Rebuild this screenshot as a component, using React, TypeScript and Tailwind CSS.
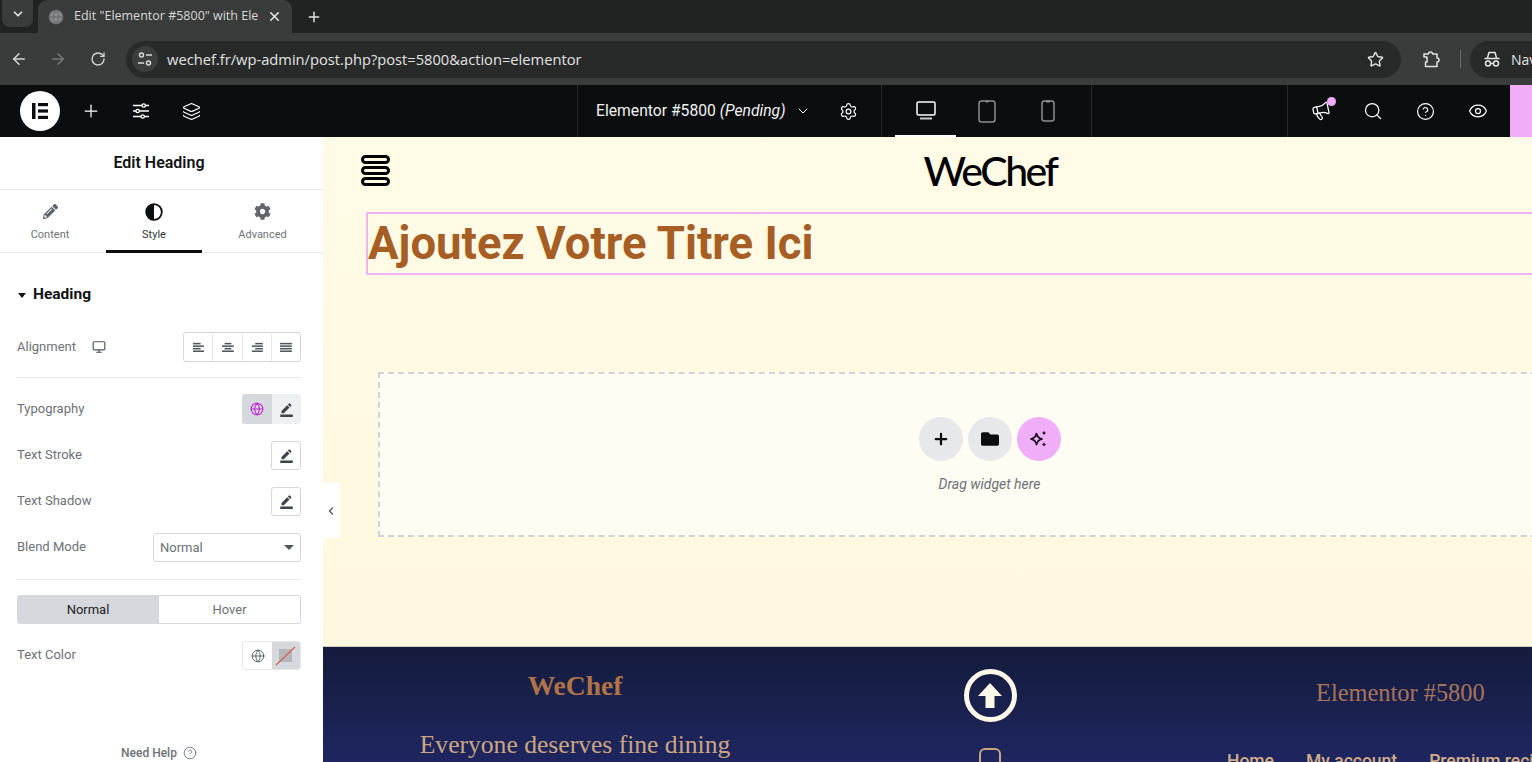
import { ArrowLeft, ArrowRight, ChevronDown, ChevronLeft, CircleHelp, Eye, Globe, Layers, Megaphone, Monitor, Plus, RotateCw, Search, Settings, Star, X } from 'lucide-react';
import { FaCog, FaFolder, FaPencilAlt } from 'react-icons/fa';
import { MdBorderColor } from 'react-icons/md';
import type { ReactNode } from 'react';

const AlignIcon = ({ kind }: { kind: 'left' | 'center' | 'right' | 'justify' }) => {
  const rows: Record<string, [number, number][]> = {
    left: [[1, 9], [1, 13], [1, 9], [1, 13]],
    center: [[4, 8], [1, 14], [4, 8], [1, 14]],
    right: [[6, 9], [2, 13], [6, 9], [2, 13]],
    justify: [[1, 14], [1, 14], [1, 14], [1, 14]],
  };
  return (
    <svg width="13" height="11" viewBox="0 0 15 13" fill="#50565c">
      {rows[kind].map(([x, w], i) => (
        <rect key={i} x={x} y={1 + i * 3} width={w} height="1.8" />
      ))}
    </svg>
  );
};

const TuneIcon = () => (
  <svg width="16" height="16" viewBox="0 0 16 16" fill="none" stroke="#d6d8d8" strokeWidth="1.5">
    <circle cx="4.5" cy="4" r="2" />
    <path d="M9 4h6M1 12h6" />
    <circle cx="11.5" cy="12" r="2" />
  </svg>
);

const IncognitoIcon = () => (
  <svg className="shrink-0" width="20" height="20" viewBox="0 0 20 20" fill="none" stroke="#e3e3e3" strokeWidth="1.5">
    <path d="M5.5 9 7 3.500h6L14.500 9M2.500 9.500h15" />
    <circle cx="6" cy="14.500" r="2.500" />
    <circle cx="14" cy="14.500" r="2.500" />
    <path d="M8.500 14.500h3" />
  </svg>
);

const ExtensionIcon = () => (
  <svg width="18" height="18" viewBox="0 0 18 18" fill="none" stroke="#e3e3e3" strokeWidth="1.500" strokeLinejoin="round">
    <path d="M2 4h4.500a2 2 0 0 1 4 0H15v4a2 2 0 0 1 0 4v4.500H3.500V12H5V7H2z" />
  </svg>
);

const SlidersIcon = () => (
  <svg width="18" height="18" viewBox="0 0 18 18" fill="none" stroke="#fff" strokeWidth="1.300">
    <path d="M1 3.500h9M13.500 3.500H17M1 9h3M7.500 9H17M1 14.500h8M12.500 14.500H17" />
    <circle cx="11.700" cy="3.500" r="1.700" />
    <circle cx="5.700" cy="9" r="1.700" />
    <circle cx="10.700" cy="14.500" r="1.700" />
  </svg>
);

const DesktopIcon = () => (
  <svg width="20" height="19" viewBox="0 0 20 19" fill="none" stroke="#fff" strokeWidth="1.500">
    <rect x="1" y="1" width="18" height="13" rx="1.500" />
    <path d="M4 17.500h12" strokeWidth="2" stroke="#c9cbcd" />
  </svg>
);

const TabletIcon = () => (
  <svg width="18" height="23" viewBox="0 0 18 23" fill="none" stroke="#8a8d90" strokeWidth="1.500">
    <rect x="1" y="1" width="16" height="21" rx="2.500" />
    <path d="M7.500 1.500h3" strokeWidth="2" />
  </svg>
);

const PhoneIcon = () => (
  <svg width="14" height="22" viewBox="0 0 14 22" fill="none" stroke="#8a8d90" strokeWidth="1.500">
    <rect x="1" y="1" width="12" height="20" rx="2.500" />
    <path d="M5 1.500h4" strokeWidth="2" />
  </svg>
);

const ElementorLogo = () => (
  <div className="flex h-10 w-10 items-center justify-center rounded-full bg-white">
    <svg width="16" height="16" viewBox="0 0 16 16" fill="#0c0d0e">
      <rect x="0" y="0" width="3.500" height="16" />
      <rect x="6" y="0" width="10" height="3.200" />
      <rect x="6" y="6.400" width="10" height="3.200" />
      <rect x="6" y="12.800" width="10" height="3.200" />
    </svg>
  </div>
);

const HalfCircle = () => (
  <svg width="18" height="18" viewBox="0 0 18 18">
    <circle cx="9" cy="9" r="7.800" fill="#fff" stroke="#0c0d0e" strokeWidth="1.800" />
    <path d="M9 1.500a7.500 7.500 0 0 0 0 15z" fill="#0c0d0e" />
  </svg>
);

const SparkleIcon = () => (
  <svg width="20" height="20" viewBox="0 0 20 20" fill="none" stroke="#120a14" strokeWidth="1.700" strokeLinejoin="round">
    <path d="M7.500 4.500c.7 3.300 2 4.700 5.500 5.500-3.500.8-4.800 2.200-5.500 5.500C6.800 12.200 5.500 10.800 2 10c3.500-.8 4.800-2.200 5.500-5.500z" />
    <path d="M15 1.500c.3 1.700.9 2.300 2.500 2.500-1.600.2-2.200.8-2.500 2.500-.3-1.700-.9-2.300-2.500-2.500 1.600-.2 2.200-.8 2.500-2.500zM15 13c.3 1.700.9 2.300 2.500 2.500-1.600.2-2.200.8-2.500 2.500-.3-1.700-.9-2.300-2.500-2.500 1.600-.2 2.200-.8 2.500-2.500z" fill="#120a14" stroke="none" />
  </svg>
);

const ControlRow = ({ label, extra, children, className }: { label: string; extra?: ReactNode; children: ReactNode; className: string }) => (
  <div className={`flex shrink-0 items-center justify-between pl-[17px] pr-[22px] ${className}`}>
    <div className="-mt-[1.500px] flex items-center text-[13px] text-[#6d7278]">
      {label}
      {extra}
    </div>
    {children}
  </div>
);

const EditButton = () => (
  <div className="flex h-[29px] w-[30px] items-center justify-center rounded-[3px] border border-[#d5d8dc] bg-white">
    <MdBorderColor size={15} color="#3f444b" />
  </div>
);

const BrowserChrome = () => (
  <div className="[font-family:'Open_Sans',sans-serif]">
    <div className="flex h-[33px] items-center bg-[#212323]">
      <div className="ml-[2px] flex h-[27px] w-[31px] items-center justify-center self-start rounded-b-[8px] bg-[#3a3b3b]">
        <ChevronDown size={14} strokeWidth={3} color="#e3e3e3" />
      </div>
      <div className="ml-[5px] flex h-[33px] w-[254px] items-center rounded-t-[9px] bg-[#3a3b3b] pl-[10px]">
        <Globe size={16} color="#6f7274" fill="#8a8d8f" />
        <span className="ml-[10px] w-[182px] whitespace-nowrap text-[12.500px] text-[#d8d9d9]">Edit "Elementor #5800" with Ele</span>
        <X size={15} strokeWidth={2.500} color="#e3e3e3" className="ml-[11px]" />
      </div>
      <Plus size={16} strokeWidth={2.200} color="#e3e3e3" className="ml-[14px]" />
    </div>
    <div className="flex h-[52px] items-center bg-[#3a3b3b]">
      <ArrowLeft size={18} color="#d6d8d8" className="ml-[10px] shrink-0" />
      <ArrowRight size={18} color="#77797a" className="ml-[21px] shrink-0" />
      <RotateCw size={16} color="#d6d8d8" className="ml-[23px] shrink-0" />
      <div className="ml-[20px] flex h-[37px] w-[1275px] shrink-0 items-center rounded-full bg-[#282a2a] pl-[6px] pr-[17px]">
        <div className="flex h-[26px] w-[26px] items-center justify-center rounded-full bg-[#3c3d3d]">
          <TuneIcon />
        </div>
        <span className="ml-[9px] flex-1 text-[14.700px] text-[#e3e3e3]">wechef.fr/wp-admin/post.php?post=5800&amp;action=elementor</span>
        <Star size={17} color="#e3e3e3" />
      </div>
      <div className="ml-[21px] shrink-0"><ExtensionIcon /></div>
      <div className="ml-[20px] h-[18px] w-px shrink-0 bg-[#6a6b6b]" />
      <div className="ml-[9px] flex h-[37px] min-w-0 flex-1 items-center overflow-hidden rounded-l-full bg-[#282a2a] pl-[12px]">
        <IncognitoIcon />
        <span className="ml-[9px] text-[14px] text-[#e3e3e3]">Nav</span>
      </div>
    </div>
  </div>
);

const TopBar = () => (
  <div className="flex h-[52px] bg-[#0c0d0e] text-white">
    <div className="flex w-[577px] items-center pl-[20px]">
      <ElementorLogo />
      <Plus size={20} strokeWidth={1.500} className="ml-[21px]" />
      <div className="ml-[31px]"><SlidersIcon /></div>
      <Layers size={19} strokeWidth={1.500} className="ml-[32px]" />
    </div>
    <div className="flex w-[304px] items-center border-l border-[#26282b] pl-[18px]">
      <span className="text-[15.700px] text-[#f1f2f3]">Elementor #5800 <i>(Pending)</i></span>
      <ChevronDown size={16} strokeWidth={1.500} className="ml-[10px]" />
      <Settings size={19} strokeWidth={1.500} className="ml-[28px]" />
    </div>
    <div className="flex w-[211px] border-x border-[#26282b] pl-[13px]">
      <div className="flex w-[61px] items-center justify-center border-b-2 border-white">
        <DesktopIcon />
      </div>
      <div className="flex w-[61px] items-center justify-center">
        <TabletIcon />
      </div>
      <div className="flex w-[61px] items-center justify-center">
        <PhoneIcon />
      </div>
    </div>
    <div className="flex-1" />
    <div className="flex w-[223px] items-center border-l border-[#26282b] pl-[23px]">
      <div className="relative">
        <Megaphone size={20} strokeWidth={1.500} className="-rotate-12" />
        <div className="absolute -right-[5px] -top-[4px] h-[9px] w-[9px] rounded-full bg-[#efaef7]" />
      </div>
      <Search size={20} strokeWidth={1.500} className="ml-[32px]" />
      <CircleHelp size={19} strokeWidth={1.500} className="ml-[33px]" />
      <Eye size={20} strokeWidth={1.500} className="ml-[33px]" />
    </div>
    <div className="w-[22px] bg-[#efaef7]" />
  </div>
);

const Sidebar = () => (
  <aside className="flex h-full w-[323px] shrink-0 flex-col bg-white">
    <div className="flex h-[53px] shrink-0 items-center justify-center border-b border-[#e6e8ea] pr-[5px] text-[16px] font-semibold text-[#111315]">Edit Heading</div>
    <div className="flex h-[63px] shrink-0 border-b border-[#e6e8ea]">
      <div className="flex w-[106px] flex-col items-center pr-[6px] pt-[14px] text-[#6d7278]">
        <FaPencilAlt size={15} color="#60656b" />
        <span className="mt-[8px] text-[11px]">Content</span>
      </div>
      <div className="flex h-[63px] w-[96px] flex-col items-center border-b-[3px] border-[#0c0d0e] pt-[13px] text-[#33373d]">
        <HalfCircle />
        <span className="mt-[6px] text-[11px]">Style</span>
      </div>
      <div className="flex flex-1 flex-col items-center pt-[13px] text-[#6d7278]">
        <FaCog size={17} color="#60656b" />
        <span className="mt-[7px] text-[11px]">Advanced</span>
      </div>
    </div>
    <div className="mt-[32px] flex h-[20px] shrink-0 items-center pl-[18px] text-[15.500px] font-bold text-[#111315]">
      <div className="h-0 w-0 border-x-[4px] border-t-[5px] border-x-transparent border-t-[#111315]" />
      <span className="ml-[7px]">Heading</span>
    </div>
    <ControlRow
      label="Alignment"
      className="mt-[27px]"
      extra={<Monitor size={14} color="#50565c" className="ml-[16px] mt-[2px]" />}
    >
      <div className="flex h-[30px] w-[118px] rounded-[3px] border border-[#d5d8dc] bg-white">
        <div className="flex flex-1 items-center justify-center border-r border-[#e6e8ea]"><AlignIcon kind="left" /></div>
        <div className="flex flex-1 items-center justify-center border-r border-[#e6e8ea]"><AlignIcon kind="center" /></div>
        <div className="flex flex-1 items-center justify-center border-r border-[#e6e8ea]"><AlignIcon kind="right" /></div>
        <div className="flex flex-1 items-center justify-center"><AlignIcon kind="justify" /></div>
      </div>
    </ControlRow>
    <div className="ml-[17px] mt-[15px] h-px w-[284px] shrink-0 bg-[#e6e8ea]" />
    <ControlRow label="Typography" className="mt-[16px]">
      <div className="flex h-[30px] w-[59px] overflow-hidden rounded-[3px]">
        <div className="flex w-[30px] items-center justify-center bg-[#d5d8dc]">
          <Globe size={14} color="#c026d3" strokeWidth={1.800} />
        </div>
        <div className="flex flex-1 items-center justify-center bg-[#eef0f2]">
          <MdBorderColor size={15} color="#3f444b" />
        </div>
      </div>
    </ControlRow>
    <ControlRow label="Text Stroke" className="mt-[17px]">
      <EditButton />
    </ControlRow>
    <ControlRow label="Text Shadow" className="mt-[17px]">
      <EditButton />
    </ControlRow>
    <ControlRow label="Blend Mode" className="mt-[17px]">
      <div className="flex h-[29px] w-[148px] items-center justify-between rounded-[3px] border border-[#d5d8dc] pl-[6px] pr-[6px] text-[13px] text-[#6d7278]">
        Normal
        <div className="h-0 w-0 border-x-[5px] border-t-[5px] border-x-transparent border-t-[#50565c]" />
      </div>
    </ControlRow>
    <div className="ml-[17px] mt-[17px] h-px w-[284px] shrink-0 bg-[#e6e8ea]" />
    <div className="ml-[17px] mt-[15px] flex h-[29px] w-[284px] shrink-0 text-[13px]">
      <div className="flex w-[142px] items-center justify-center rounded-l-[3px] bg-[#d5d8dc] text-[#1f2124]">Normal</div>
      <div className="flex w-[142px] items-center justify-center rounded-r-[3px] border border-l-0 border-[#d5d8dc] text-[#6d7278]">Hover</div>
    </div>
    <ControlRow label="Text Color" className="mt-[17px]">
      <div className="flex h-[29px] w-[59px] overflow-hidden rounded-[3px] border border-[#e6e8ea]">
        <div className="flex w-[29px] items-center justify-center">
          <Globe size={14} color="#50565c" strokeWidth={1.500} />
        </div>
        <div className="flex flex-1 items-center justify-center bg-[#d5d8dc]">
          <svg width="22" height="20" viewBox="0 0 22 20">
            <rect x="4" y="3" width="13" height="13" fill="#b4b6ba" />
            <path d="M1 19 20 1" stroke="#d9604f" strokeWidth="1.200" />
          </svg>
        </div>
      </div>
    </ControlRow>
    <div className="mt-[74px] flex shrink-0 items-center justify-center pr-[5px] text-[12px] font-medium text-[#6d7278]">
      Need Help
      <CircleHelp size={14} strokeWidth={1.500} className="ml-[6px]" />
    </div>
  </aside>
);

const Canvas = () => (
  <main className="relative h-full flex-1 overflow-hidden">
    <div className="w-[1334px]">
      <section className="h-[509px] bg-gradient-to-b from-[#fffbe6] to-[#fff8e0]">
        <div className="relative flex h-[75px] items-start justify-center">
          <div className="absolute left-[38px] top-[18px] flex flex-col gap-[2px]">
            <div className="h-[9px] w-[29px] rounded-full border-[3px] border-black" />
            <div className="h-[9px] w-[29px] rounded-full border-[3px] border-black" />
            <div className="h-[9px] w-[29px] rounded-full border-[3px] border-black" />
          </div>
          <span className="pt-[9px] text-[41px] font-medium leading-[50px] tracking-[-2.500px] text-black [font-family:Lato,sans-serif]">WeChef</span>
        </div>
        <div className="ml-[43px] flex h-[63px] items-center border-2 border-[#efb4f7] pt-[2px] text-[45.500px] font-bold text-[#a65e24]">
          Ajoutez Votre Titre Ici
        </div>
        <div className="ml-[55px] mt-[97px] flex h-[165px] flex-col items-center border-2 border-dashed border-[#d2d4d4] bg-[#fffdf3] pr-[56px] pt-[43px]">
          <div className="flex gap-[5px]">
            <div className="flex h-[44px] w-[44px] items-center justify-center rounded-full bg-[#e6e8ea]">
              <Plus size={18} strokeWidth={3} color="#0c0d0e" />
            </div>
            <div className="flex h-[44px] w-[44px] items-center justify-center rounded-full bg-[#e6e8ea]">
              <FaFolder size={18} color="#0c0d0e" />
            </div>
            <div className="flex h-[44px] w-[44px] items-center justify-center rounded-full bg-[#efaef7]">
              <SparkleIcon />
            </div>
          </div>
          <span className="mt-[13px] text-[14px] italic text-[#6d7278]">Drag widget here</span>
        </div>
      </section>
      <footer className="flex h-[116px] overflow-hidden border-t border-[#cfcdbd] bg-gradient-to-b from-[#141b3c] to-[#1f2660]">
        <div className="flex w-[504px] flex-col items-center pt-[21px] [font-family:'Liberation_Serif',serif]">
          <span className="shrink-0 text-[27.500px] font-bold leading-[36px] text-[#b07448]">WeChef</span>
          <span className="mt-[26px] shrink-0 text-[25.600px] leading-[30px] text-[#cba683]">Everyone deserves fine dining</span>
        </div>
        <div className="flex w-[326px] flex-col items-center pt-[22px]">
          <div className="flex h-[53px] w-[53px] shrink-0 items-center justify-center rounded-full border-[5px] border-[#fff9ea]">
            <svg width="26" height="30" viewBox="0 0 26 30" fill="#fff9ea">
              <path d="M13 2 25 15h-7.500v12h-9V15H1z" />
            </svg>
          </div>
          <div className="mt-[26px] h-[24px] w-[22px] shrink-0 rounded-[6px] border-2 border-[#cba683]" />
        </div>
        <div className="flex flex-1 flex-col pt-[31px]">
          <span className="shrink-0 pl-[163px] text-[24.400px] leading-[30px] text-[#a8745a] [font-family:'Liberation_Serif',serif]">Elementor #5800</span>
          <div className="mt-[40px] flex shrink-0 gap-[32px] pl-[74px] text-[17.500px] font-medium whitespace-nowrap text-[#d2ad88]">
            <span>Home</span>
            <span>My account</span>
            <span>Premium recipes</span>
          </div>
        </div>
      </footer>
    </div>
  </main>
);

export default function App() {
  return (
    <div className="flex h-[762px] w-[1532px] flex-col overflow-hidden [font-family:Roboto,sans-serif]">
      <BrowserChrome />
      <TopBar />
      <div className="relative flex h-[625px]">
        <Sidebar />
        <Canvas />
        {/* panel collapse handle */}
        <div className="absolute left-[323px] top-[346px] flex h-[55px] w-[17px] items-center justify-center bg-white pr-[1px]">
          <ChevronLeft size={12} strokeWidth={2.500} color="#50565c" />
        </div>
      </div>
    </div>
  );
}
